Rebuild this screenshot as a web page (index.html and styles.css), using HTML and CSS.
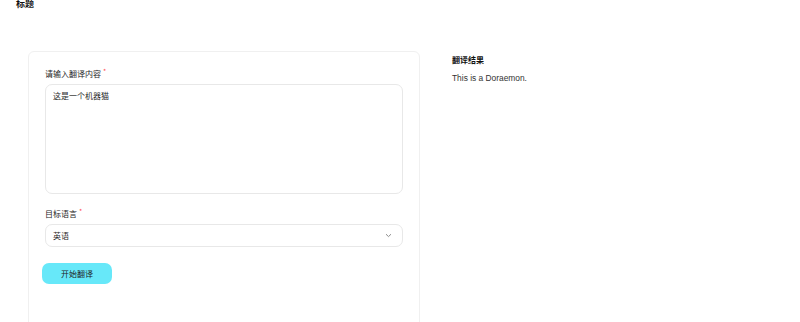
FILE: index.html
```html
<html>
    <head>
        <meta charset="utf-8">
        <link rel="stylesheet" href="styles.css">
    </head>
    <body>
        <h1 class="title">标题</h1>

        <div class="main">
            <div class="card">
                <label class="label" for="source">请输入翻译内容<span class="req">*</span></label>
                <textarea id="source" class="textarea">这是一个机器猫</textarea>

                <label class="label label-gap" for="lang">目标语言<span class="req">*</span></label>
                <div class="select" id="lang">
                    <span>英语</span>
                    <svg class="chevron" width="7" height="5" viewBox="0 0 7 5">
                        <path d="M1 1.2 L3.5 3.6 L6 1.2" fill="none" stroke="#8c8c8c" stroke-width="1"/>
                    </svg>
                </div>

                <button class="btn">开始翻译</button>
            </div>

            <div class="result">
                <div class="result-title">翻译结果</div>
                <div class="result-text">This is a Doraemon.</div>
            </div>
        </div>
    </body>
</html>
```

FILE: styles.css
```css
body {
    margin: 0;
    padding: 0 16px;
    font-family: "Noto Sans CJK SC", "Liberation Sans", sans-serif;
    font-size: 8px;
    color: #1f1f1f;
    background: #ffffff;
}

.title {
    margin: -2px 0 0 0;
    font-size: 9px;
    line-height: 12px;
    font-weight: bold;
    color: #111111;
}

.main {
    display: flex;
    gap: 32px;
    margin: 41px 0 0 12px;
}

.card {
    width: 358px;
    height: 300px;
    padding: 16px 16px 0 16px;
    border: 1px solid #f0f0f0;
    border-radius: 6px;
    display: flex;
    flex-direction: column;
}

.label {
    display: block;
    line-height: 12px;
    color: #262626;
}

.label-gap {
    margin-top: 14px;
}

.req {
    color: #ff4d4f;
    font-size: 7px;
    margin-left: 2px;
    position: relative;
    top: -3px;
}

.textarea {
    margin-top: 4px;
    height: 110px;
    padding: 5px 7px;
    border: 1px solid #e8e8e8;
    border-radius: 7px;
    font-family: "Noto Sans CJK SC", sans-serif;
    font-size: 8px;
    line-height: 12px;
    color: #1f1f1f;
    resize: none;
    box-sizing: border-box;
    outline: none;
}

.select {
    margin-top: 4px;
    height: 23px;
    padding: 0 10px 0 7px;
    border: 1px solid #e8e8e8;
    border-radius: 7px;
    display: flex;
    align-items: center;
    justify-content: space-between;
    box-sizing: border-box;
}

.btn {
    margin: 16px 0 0 -3px;
    width: 70px;
    height: 21px;
    border: none;
    border-radius: 7px;
    background: #67e8f9;
    font-family: "Noto Sans CJK SC", sans-serif;
    font-size: 8px;
    color: #1f1f1f;
    padding: 0;
}

.result {
    padding-top: 3px;
}

.result-title {
    font-weight: bold;
    line-height: 12px;
    color: #111111;
}

.result-text {
    margin-top: 6px;
    line-height: 12px;
    font-family: "Liberation Sans", sans-serif;
    font-size: 8.4px;
    color: #333333;
}
```
